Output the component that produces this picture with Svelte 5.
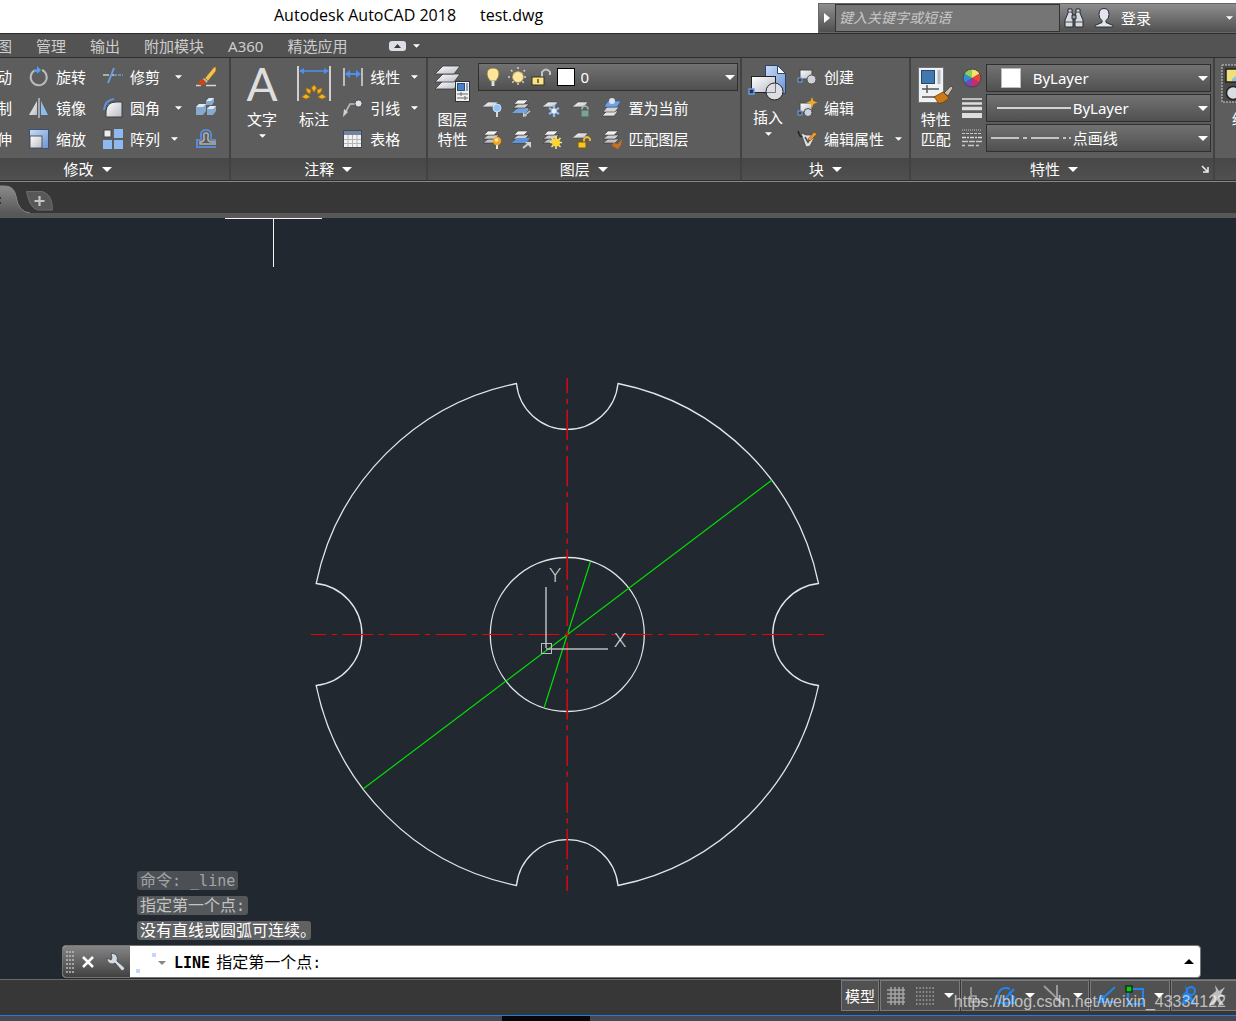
<script lang="ts">
    type Tool = { icon: string; label: string; menu?: boolean; wide?: boolean };

    const tabs = ["视图", "管理", "输出", "附加模块", "A360", "精选应用"];

    const modifyClipped = ["移动", "复制", "拉伸"];
    const modifyLeft: Tool[] = [
        { icon: "rotate", label: "旋转" },
        { icon: "mirror", label: "镜像" },
        { icon: "scale", label: "缩放" },
    ];
    const modifyRight: Tool[] = [
        { icon: "trim", label: "修剪", menu: true, wide: true },
        { icon: "fillet", label: "圆角", menu: true, wide: true },
        { icon: "array", label: "阵列", menu: true },
    ];
    const modifyIcons = ["erase", "explode", "offset"];

    const annotate: Tool[] = [
        { icon: "linear", label: "线性", menu: true },
        { icon: "leader", label: "引线", menu: true },
        { icon: "table", label: "表格" },
    ];

    const layerRows = [
        {
            icons: ["layoff", "layiso", "layfreeze", "laylock"],
            last: { icon: "laycurrent", label: "置为当前" },
        },
        {
            icons: ["layon", "layuniso", "laythaw", "layunlock"],
            last: { icon: "laymatch", label: "匹配图层" },
        },
    ];

    const block: Tool[] = [
        { icon: "blockcreate", label: "创建" },
        { icon: "blockedit", label: "编辑" },
        { icon: "attedit", label: "编辑属性", menu: true },
    ];

    const statusGroups = [
        ["grid", "snap", "menu"],
        ["ortho", "polar", "menu", "isodraft", "menu"],
        ["otrack", "osnap", "menu"],
        ["annovis", "annoauto"],
    ];

    let command = $state("");
    let search = $state("");
</script>

{#snippet arrow(small = false)}
    <svg class="arrow" class:small viewBox="0 0 10 5" aria-hidden="true">
        <path d="M0 0h10L5 5z" />
    </svg>
{/snippet}

{#snippet stack()}
    <path d="M6 10h11l-4 4H1z" fill="#c4c4c4" stroke="#333" stroke-width=".6" />
    <path d="M6 6h11l-4 4H1z" fill="#cfcfcf" stroke="#333" stroke-width=".6" />
    <path d="M6 2h10l-4 4H2z" fill="#f2f2f2" stroke="#444" stroke-width=".6" />
{/snippet}

{#snippet sheet()}
    <path d="M6 4h10l-4 5H0z" fill="url(#silver)" stroke="#444" stroke-width=".6" />
{/snippet}

{#snippet icon(name: string)}
    <svg class="icon" viewBox="0 0 20 20" aria-hidden="true">
        {#if name === "rotate"}
            <path d="M6 3.2A8 8 0 1 0 13 3" fill="none" stroke="#b9bcbc" stroke-width="2" />
            <path d="M5 4 11 3" stroke="#5b9bf0" stroke-width="2.4" />
            <path d="M8-1l4 4-4 4z" fill="#5b9bf0" />
        {:else if name === "mirror"}
            <path d="M8 3v14H0z" fill="url(#silver)" />
            <path d="M12 3v14h7z" fill="#8dbcf0" />
            <path d="M10 0v20" stroke="#c9c9c9" stroke-width="1.4" />
        {:else if name === "scale"}
            <rect x=".5" y=".5" width="19" height="19" fill="url(#blue)" stroke="#38507c" />
            <rect x="1" y="7" width="12" height="12" fill="url(#silver)" stroke="#555" />
        {:else if name === "trim"}
            <path d="M0 8h6M8 8h3" stroke="#c9c9c9" stroke-width="1.6" />
            <path d="M5 16 11 1" stroke="#6a9ee0" stroke-width="2" />
            <path d="M11 8h9" stroke="#6a9ee0" stroke-width="1.6" stroke-dasharray="3 1" />
        {:else if name === "fillet"}
            <path d="M3 19v-6q1-9 10-9h6v15z" fill="url(#silver)" stroke="#3f3f3f" />
            <path d="M1 12Q2 2 11 1" fill="none" stroke="#5d92dc" stroke-width="2" />
        {:else if name === "array"}
            <rect x="1" y="1" width="7" height="7" fill="#ededed" stroke="#444" />
            <rect x="11" y="0" width="9" height="9" fill="#8db8f2" />
            <rect x="0" y="11" width="9" height="9" fill="#8db8f2" />
            <rect x="11" y="11" width="9" height="9" fill="#8db8f2" />
        {:else if name === "erase"}
            <path d="M0 18.5h5M10 18.5h10" stroke="#d6d6d6" stroke-width="1.4" />
            <path d="M9 11 18 0h2v4l-8 10z" fill="#efc252" stroke="#8a5a10" stroke-width=".7" />
            <path d="M8 11l4 3-2 2-4-3z" fill="#b7bec8" />
            <path d="M3 18q-1-5 4-6l3 3q-2 4-7 3z" fill="#cf4510" />
        {:else if name === "explode"}
            <path d="M0 9l3-3h7v7l-3 4H0zM10 3l3-3h5v4l-2 3h-6zM11 10l3-2h6v5l-3 4h-6z" fill="#88a9cb" />
            <path d="M0 9l3-3h7L7 9zM10 3l3-3h5l-3 3zM11 11l3-3h6l-3 3z" fill="#dceafa" />
        {:else if name === "offset"}
            <path d="M20 11h-4q-2 0-1-3 1-7-5-7T5 8q1 3-1 3H1v7h19" fill="none" stroke="#5a8bd0" stroke-width="2" />
            <path d="M20 13h-5q-4-1-3-5 1-4-2-4T8 8q1 4-3 5H4v2h16" fill="none" stroke="#b0b0b0" stroke-width="1.6" />
        {:else if name === "linear"}
            <path d="M1 1v18M19 1v18" stroke="#d4d4d4" stroke-width="1.6" />
            <path d="M3 7h14" stroke="#4c91f0" stroke-width="2" />
            <path d="M2 7l5-4v8zM18 7l-5-4v8z" fill="#4c91f0" />
        {:else if name === "leader"}
            <path d="M2 15 7 6h7" fill="none" stroke="#bcbcbc" stroke-width="1.6" />
            <path d="M0 19l1-8 4 3z" fill="#d0d0d0" />
            <circle cx="15.5" cy="5.5" r="3.6" fill="#dfe2ea" stroke="#4b4b4b" />
        {:else if name === "table"}
            <rect x=".5" y="1.5" width="18" height="17" fill="#f2f2f2" stroke="#3f4a58" />
            <path d="M1 4h17" stroke="#74859b" stroke-width="4" />
            <path d="M1 10.5h17M1 14.5h17M5 6v12M9.5 6v12M14 6v12" stroke="#b3b3b3" />
        {:else if name === "layoff"}
            {@render sheet()}
            <path d="M15 13v6" stroke="#d5d5d5" stroke-width="2" />
            <circle cx="15" cy="10" r="4" fill="#8fc2f5" stroke="#d9ecff" stroke-width=".8" />
        {:else if name === "layiso"}
            {@render stack()}
            <path d="M5 11h12l-3 4H0z" fill="#6ea4e6" />
            <path d="M18 13l-5 4" stroke="#c6c6c6" stroke-width="1.6" />
            <path d="M11 19v-5l4 4z" fill="#c6c6c6" />
        {:else if name === "layfreeze"}
            {@render sheet()}
            <path d="M12 7v12M7 10l10 6M17 10 7 16" stroke="#93b8e8" stroke-width="2.4" />
            <circle cx="12" cy="13" r="2.5" fill="#e6f1ff" />
        {:else if name === "laylock"}
            {@render sheet()}
            <path d="M10 13v-3q3-4 6 0v3" fill="none" stroke="#9bb3ac" stroke-width="1.6" />
            <rect x="9" y="12" width="8" height="7" fill="#7fa095" stroke="#47655b" />
        {:else if name === "laycurrent"}
            <path d="M5 13h11l-4 5H0z" fill="#e4e4e4" stroke="#333" stroke-width=".6" />
            <path d="M5 9h12l-4 5H1z" fill="#d4d4d4" stroke="#333" stroke-width=".6" />
            <path d="M6 3h13l-4 6H2z" fill="#6ea4e6" stroke="#2f5282" stroke-width=".6" />
            <circle cx="10" cy="3" r="3" fill="#dce3ec" />
        {:else if name === "layon"}
            {@render stack()}
            <path d="M15 14v6" stroke="#ececec" stroke-width="2" />
            <circle cx="15" cy="12" r="4.2" fill="#f5a21c" />
            <circle cx="14.5" cy="11" r="2" fill="#ffe3a0" />
        {:else if name === "layuniso"}
            {@render stack()}
            <path d="M5 9h13l-4 5H0z" fill="#5f94dc" />
            <path d="M11 19l5-4" stroke="#d2d2d2" stroke-width="1.8" />
            <path d="M13 13h6v6z" fill="#d2d2d2" />
        {:else if name === "laythaw"}
            {@render stack()}
            <path d="M14 7v13M8 13.5h12M9.5 9l9 9M18.5 9l-9 9" stroke="#f8e58c" stroke-width="1.6" />
            <circle cx="14" cy="13.5" r="4" fill="#ffd52b" />
        {:else if name === "layunlock"}
            {@render sheet()}
            <path d="M12 13v-3q3-4 6 0v2" fill="none" stroke="#f0bf2c" stroke-width="1.8" />
            <rect x="6" y="13" width="8" height="6" fill="#f3c625" stroke="#7a5a05" />
        {:else if name === "laymatch"}
            {@render stack()}
            <path d="M20 10l-4 5-5-1-1 3 6 3 3-4z" fill="#c8701e" />
        {:else if name === "blockcreate"}
            <rect x="3" y="3" width="12" height="9" fill="url(#silver)" stroke="#4b4b4b" />
            <circle cx="14.5" cy="12.5" r="4.5" fill="#cfd2d8" stroke="#505050" />
            <rect x="1" y="11" width="4" height="4" fill="#444" stroke="#6ea4ee" />
        {:else if name === "blockedit"}
            <rect x="3" y="5" width="12" height="9" fill="url(#silver)" stroke="#4b4b4b" />
            <circle cx="11" cy="14.5" r="4" fill="#cfd2d8" stroke="#505050" />
            <rect x="1" y="13" width="4" height="4" fill="#444" stroke="#6ea4ee" />
            <path d="M15-1l1.5 4 4 1.5-4 1.5-1.5 4-1.5-4-4-1.5 4-1.5z" fill="#f5a823" />
        {:else if name === "attedit"}
            <path d="M1 2l2 5 3 1" fill="none" stroke="#222" stroke-width="1.5" />
            <path d="M4 4l5 2h6l2 3-4 8-4 1z" fill="#e1e1e1" stroke="#444" stroke-width=".7" />
            <path d="M8 8l3 5 2-3" fill="none" stroke="#555" stroke-width="1.8" />
            <path d="M11 10l6-7 3 2-7 7z" fill="#e99a2e" stroke="#7a4310" stroke-width=".6" />
        {:else if name === "lineweight"}
            <path d="M0 1h20" stroke="#dedede" stroke-width="1.5" />
            <path d="M0 5.5h20" stroke="#dedede" stroke-width="2.5" />
            <path d="M0 10.5h20" stroke="#dedede" stroke-width="3.5" />
            <path d="M0 17.5h20" stroke="#dedede" stroke-width="5" />
        {:else if name === "linetype"}
            <path d="M0 2h20" stroke="#c9c9c9" stroke-dasharray="1 1" />
            <path d="M0 5.5h20" stroke="#c9c9c9" stroke-dasharray="3 1" />
            <path d="M0 9.5h20" stroke="#d9d9d9" stroke-width="1.5" stroke-dasharray="4 1 2 1" />
            <path d="M0 13.5h20" stroke="#c9c9c9" stroke-width="1.5" stroke-dasharray="6 1" />
            <path d="M0 17.5h20" stroke="#c9c9c9" stroke-width="1.5" stroke-dasharray="3 3 6 2" />
        {:else if name === "color"}
            <path d="M10 10V1a9 9 0 0 1 7.8 4.5z" fill="#f6e26a" />
            <path d="M10 10 17.8 5.5a9 9 0 0 1 0 9z" fill="#e8453a" />
            <path d="M10 10l7.8 4.5A9 9 0 0 1 10 19z" fill="#c22d70" />
            <path d="M10 10v9a9 9 0 0 1-7.8-4.5z" fill="#7446b8" />
            <path d="M10 10 2.2 14.5a9 9 0 0 1 0-9z" fill="#2f8fd0" />
            <path d="M10 10 2.2 5.5A9 9 0 0 1 10 1z" fill="#8fce5a" />
            <circle cx="10" cy="10" r="9" fill="none" stroke="#444" />
        {:else if name === "grid"}
            <path d="M5 1v18M9 1v18M13 1v18M17 1v18M1 4h18M1 8h18M1 12h18M1 16h18" stroke="#a4a4a4" stroke-width="1.5" />
        {:else if name === "snap"}
            <path d="M1 2h18M1 6h18M1 10h18M1 14h18M1 18h18" stroke="#a3a3a3" stroke-width="1.5" stroke-dasharray="1.5 1.8" />
        {:else if name === "ortho"}
            <path d="M4 1v15h14M4 10h5v6" fill="none" stroke="#a0a0a0" stroke-width="1.6" />
        {:else if name === "polar"}
            <path d="M18 10a8 8 0 1 1-4-7M1 17h19M8 14 18 3M13 6q4 4 3 8" fill="none" stroke="#2384ea" stroke-width="2" />
        {:else if name === "isodraft"}
            <path d="M0 0l20 19M13-1v16" stroke="#a0a0a0" stroke-width="1.8" />
        {:else if name === "otrack"}
            <path d="M19 1 6 13M0 16h19" stroke="#2384ea" stroke-width="2" />
            <circle cx="6" cy="12" r="3" fill="#2384ea" />
        {:else if name === "osnap"}
            <path d="M4 3h14v15H3V4" fill="none" stroke="#2384ea" stroke-width="2" />
            <rect x="1" y="0" width="6" height="6" fill="#17c41b" stroke="#073b08" stroke-width="1.5" />
        {:else if name === "annovis"}
            <path d="M8-1 9 5 4 10l4-1-4 9h5l3-5 3 5h4l-5-8z" fill="#2384ea" />
            <circle cx="14" cy="5" r="4" fill="#4c5966" stroke="#2384ea" stroke-width="2" />
        {:else if name === "annoauto"}
            <path d="M9-1l1 6-6 5 4-1-5 10h5l3-5 3 5h4l-5-8 7-1-5-2 4-7-6 4z" fill="#bdbdbd" />
        {/if}
    </svg>
{/snippet}

{#snippet tool(t: Tool)}
    <button class="tool">
        {@render icon(t.icon)}
        <span>{t.label}</span>
        {#if t.menu}
            <span class="drop" class:wide={t.wide}>{@render arrow(true)}</span>
        {/if}
    </button>
{/snippet}

{#snippet footer(label: string)}
    <button class="panel-title">{label}{@render arrow()}</button>
{/snippet}

<svg class="defs" aria-hidden="true">
    <defs>
        <linearGradient id="silver" x1="0" y1="0" x2="1" y2="1">
            <stop offset="0" stop-color="#ffffff" />
            <stop offset="1" stop-color="#b9bcc6" />
        </linearGradient>
        <linearGradient id="blue" x1="0" y1="0" x2="1" y2="1">
            <stop offset="0" stop-color="#c9dcf6" />
            <stop offset="1" stop-color="#6c95d2" />
        </linearGradient>
        <linearGradient id="tab" x1="0" y1="0" x2="0" y2="1">
            <stop offset="0" stop-color="#8b8b8b" />
            <stop offset="1" stop-color="#595959" />
        </linearGradient>
    </defs>
</svg>

<div class="app">
    <header class="title-bar">
        <h1><span>Autodesk AutoCAD 2018</span><span>test.dwg</span></h1>
        <div class="info-bar">
            <button class="expand" aria-label="展开">
                <svg width="6" height="10" viewBox="0 0 6 10"><path d="M0 0v10l6-5z" fill="#fff" /></svg>
            </button>
            <input type="text" placeholder="键入关键字或短语" aria-label="搜索" bind:value={search} />
            <button class="find" aria-label="查找">
                <svg width="20" height="20" viewBox="0 0 20 20">
                    <path d="M4 1h4v4l1 2v12H1v-7L4 5zM12 1h4v4l3 7v7h-8V7l1-2z" fill="#d7dce2" stroke="#26292e" />
                    <path d="M8 7h4v4H8z" fill="#969ca5" stroke="#26292e" />
                    <path d="M1 14h8M11 14h8M4 4h4M12 4h4" stroke="#4a4f57" />
                </svg>
            </button>
            <button class="login">
                <svg width="20" height="20" viewBox="0 0 20 20">
                    <path d="M10 .5q5 0 5 6 0 4-3 6v2l7 3v1.5H1V17.5l7-3v-2q-3-2-3-6 0-6 5-6z" fill="#e2e6ec" stroke="#2b2e33" />
                </svg>
                <span>登录</span>
                {@render arrow(true)}
            </button>
        </div>
    </header>

    <nav class="tabs">
        {#each tabs as tab}
            <button>{tab}</button>
        {/each}
        <button class="collapse" aria-label="最小化功能区">
            <svg width="17" height="10" viewBox="0 0 17 10">
                <rect width="17" height="10" rx="3" fill="#dcdfe6" />
                <path d="M5 7l3.5-4L12 7z" fill="#3a3a3a" />
            </svg>
            {@render arrow(true)}
        </button>
    </nav>

    <div class="ribbon">
        <section class="panel modify">
            <div class="body">
                <div class="column clipped">
                    {#each modifyClipped as label}
                        <button class="tool"><span>{label}</span></button>
                    {/each}
                </div>
                <div class="column">
                    {#each modifyLeft as t}{@render tool(t)}{/each}
                </div>
                <div class="column">
                    {#each modifyRight as t}{@render tool(t)}{/each}
                </div>
                <div class="column">
                    {#each modifyIcons as name}
                        <button class="tool" aria-label={name}>{@render icon(name)}</button>
                    {/each}
                </div>
            </div>
            {@render footer("修改")}
        </section>

        <section class="panel annotate">
            <div class="body">
                <button class="big">
                    <svg width="34" height="40" viewBox="0 0 34 40">
                        <text x="17" y="37" text-anchor="middle" class="letter">A</text>
                    </svg>
                    <span>文字</span>
                    {@render arrow(true)}
                </button>
                <button class="big dimension">
                    <svg width="34" height="40" viewBox="0 0 34 40">
                        <path d="M1 2v35M33 2v35" stroke="#cfcfcf" stroke-width="2" />
                        <path d="M3 7h28" stroke="#4c91f0" stroke-width="1.5" />
                        <path d="M2 7l5-3v6zM32 7l-5-3v6z" fill="#4c91f0" />
                        <g fill="#f6b51c" stroke="#b4720c" stroke-width=".8">
                            <path d="M17 21l2.5 3-2.5 4-2.5-4z" />
                            <path d="M9 24l5 2-1 4-3-2z" />
                            <path d="M25 24l-5 2 1 4 3-2z" />
                            <path d="M5 33l4-3 4 3-4 2z" />
                            <path d="M29 33l-4-3-4 3 4 2z" />
                        </g>
                    </svg>
                    <span>标注</span>
                </button>
                <div class="column">
                    {#each annotate as t}{@render tool(t)}{/each}
                </div>
            </div>
            {@render footer("注释")}
        </section>

        <section class="panel layers">
            <div class="body">
                <button class="big">
                    <svg width="38" height="40" viewBox="0 0 38 40">
                        <g fill="url(#silver)" stroke="#3a3a3a" stroke-width=".8">
                            <path d="M9 17h17l-6 8H1z" />
                            <path d="M9 10h17l-6 8H1z" />
                            <path d="M9 2h17l-6 8H1z" />
                        </g>
                        <rect x="21.5" y="17.5" width="14" height="20" fill="#f1f1f1" stroke="#333" />
                        <rect x="23.5" y="19.5" width="7" height="7" fill="#4a80c4" stroke="#2b4e80" />
                        <path d="M33 19v8" stroke="#8a9fc0" stroke-width="2" />
                        <path d="M23 30h11M23 34h11M27 28v4M31 32v4" stroke="#666" />
                    </svg>
                    <span>图层<br />特性</span>
                </button>
                <div class="layer-tools">
                    <div class="combo">
                        <svg width="68" height="22" viewBox="0 0 68 22" aria-hidden="true">
                            <path d="M8 2q6 0 6 6 0 3-3 7H5Q2 11 2 8q0-6 6-6z" fill="#fbe69b" stroke="#8a7332" stroke-width=".8" />
                            <path d="M8 15v5" stroke="#d9e0e7" stroke-width="3" />
                            <path d="M33 1v20M23 11h20M26 4l14 14M40 4 26 18" stroke="#d8d4bd" stroke-width="1.5" stroke-dasharray="2 2" />
                            <circle cx="33" cy="11" r="5.5" fill="#fce79f" stroke="#a58e54" stroke-width=".7" />
                            <path d="M57 11V6q4-5 8 0v3" fill="none" stroke="#bfc5cc" stroke-width="2" />
                            <rect x="47" y="11" width="12" height="8" fill="#f8e48e" stroke="#3c3310" />
                            <path d="M53 13v4" stroke="#55481a" stroke-width="1.5" />
                        </svg>
                        <i class="swatch dark"></i>
                        <select aria-label="图层"><option>0</option></select>
                        {@render arrow()}
                    </div>
                    {#each layerRows as row}
                        <div class="row">
                            {#each row.icons as name}
                                <button class="tool" aria-label={name}>{@render icon(name)}</button>
                            {/each}
                            {@render tool(row.last)}
                        </div>
                    {/each}
                </div>
            </div>
            {@render footer("图层")}
        </section>

        <section class="panel block">
            <div class="body">
                <button class="big">
                    <svg width="40" height="38" viewBox="0 0 40 38">
                        <path d="M17.5 1.5h12l8 8v20h-20z" fill="url(#blue)" stroke="#2d4266" />
                        <path d="M29.5 1.5v8h8z" fill="#fff" stroke="#2d4266" />
                        <rect x="3.5" y="12.5" width="24" height="16" fill="url(#silver)" stroke="#222" />
                        <circle cx="26.5" cy="27.5" r="8.5" fill="#dcdee3" stroke="#222" />
                        <path d="M19 28.5h8.5V20" fill="none" stroke="#777" />
                        <rect x="1" y="25" width="5" height="5" fill="#333" stroke="#5d9cf2" stroke-width="1.5" />
                    </svg>
                    <span>插入</span>
                    {@render arrow(true)}
                </button>
                <div class="column">
                    {#each block as t}{@render tool(t)}{/each}
                </div>
            </div>
            {@render footer("块")}
        </section>

        <section class="panel properties">
            <div class="body">
                <button class="big">
                    <svg width="36" height="40" viewBox="0 0 36 40">
                        <rect x=".5" y="3.5" width="25" height="35" fill="#f0f1f3" stroke="#70757c" />
                        <rect x="3.5" y="6.5" width="13" height="13" fill="#4178ae" stroke="#24486e" />
                        <path d="M21 6v14" stroke="#b4bac2" stroke-width="3" />
                        <path d="M4 25h17M4 33h17M9 21v8" stroke="#555" stroke-width="1.5" />
                        <path d="M26 29l7-7 2 2-5 8z" fill="#c5beb2" stroke="#4c3b28" stroke-width=".8" />
                        <path d="M16 33l9-5 6 6q-6 6-11 5-1-3-4-6z" fill="#cb7a1a" stroke="#6e3c06" stroke-width=".8" />
                    </svg>
                    <span>特性<br />匹配</span>
                </button>
                <div class="combos">
                    <div class="combo-row">
                        {@render icon("color")}
                        <div class="combo">
                            <i class="swatch"></i>
                            <select class="spaced" aria-label="颜色"><option>ByLayer</option></select>
                            {@render arrow()}
                        </div>
                    </div>
                    <div class="combo-row">
                        {@render icon("lineweight")}
                        <div class="combo">
                            <svg width="82" height="4" viewBox="0 0 82 4"><path d="M6 2h74" stroke="#d4d4d4" stroke-width="2" /></svg>
                            <select aria-label="线宽"><option>ByLayer</option></select>
                            {@render arrow()}
                        </div>
                    </div>
                    <div class="combo-row">
                        {@render icon("linetype")}
                        <div class="combo">
                            <svg width="82" height="4" viewBox="0 0 82 4">
                                <path d="M0 2h80" stroke="#e4e4e4" stroke-width="1.5" stroke-dasharray="28 4 4 4 28 4 3 3 2 2" />
                            </svg>
                            <select aria-label="线型"><option>点画线</option></select>
                            {@render arrow()}
                        </div>
                    </div>
                </div>
            </div>
            <div class="footer-row">
                {@render footer("特性")}
                <button class="launcher" aria-label="特性选项板">
                    <svg width="8" height="8" viewBox="0 0 8 8">
                        <path d="M1 1l5 5M7 2v5H2" fill="none" stroke="#eee" stroke-width="1.5" />
                    </svg>
                </button>
            </div>
        </section>

        <section class="panel groups">
            <div class="body">
                <button class="big">
                    <svg width="36" height="40" viewBox="0 0 36 40">
                        <rect x="1" y="1" width="34" height="37" fill="#4a4a4a" stroke="#d0d0d0" stroke-dasharray="2 1" />
                        <rect x="5" y="5" width="20" height="13" fill="#efe07a" stroke="#222" stroke-width="1.5" />
                        <path d="M11 15l8-6h6v8H11z" fill="#8fc0e4" />
                        <circle cx="12" cy="29" r="6.5" fill="#d8dfe4" stroke="#222" stroke-width="1.5" />
                    </svg>
                    <span>组</span>
                </button>
            </div>
            <div class="panel-title"></div>
        </section>
    </div>

    <div class="file-tabs">
        <svg width="60" height="31" viewBox="0 0 60 31" aria-hidden="true">
            <path d="M0 4h5q9 0 11 10 2 16 14 17H0z" fill="url(#tab)" />
            <path d="M0 4h5q9 0 11 10 2 16 14 17" fill="none" stroke="#888" />
            <path d="M0 15v2M0 20v2" stroke="#333" stroke-width="2" />
            <path d="M26.5 9.5h16q10 3 10 18.5h-15q-8-2-11-18.5z" fill="#585858" stroke="#6c6c6c" />
            <path d="M39.5 14v10M34.5 19h10" stroke="#c4c4c4" stroke-width="2.2" />
        </svg>
    </div>

    <main class="canvas">
        <svg class="drawing" viewBox="0 218 1236 761" preserveAspectRatio="xMinYMin meet">
            <g fill="none" stroke="#e3e5e6" stroke-width="1.3">
                <path
                    d="M618 383.5A256.5 256.5 0 0 1 818.5 583.5A51.3 51.3 0 0 0 818.5 685.5A256.5 256.5 0 0 1 618 885.5A51 51 0 0 0 516.500 885.5A256.5 256.5 0 0 1 316.2 685.5A51.3 51.3 0 0 0 316.2 583.5A256.5 256.5 0 0 1 516.5 383.5A51 51 0 0 0 618 383.5z"
                />
                <circle cx="567.3" cy="634.5" r="77" />
            </g>
            <g stroke="#00df00" stroke-width="1.2">
                <path d="M363 789 772 480M544 708l46.5-146.5" />
            </g>
            <g stroke-dasharray="30.5 5.5 5.1 5.5" stroke-dashoffset="15.2">
                <path d="M311 634.5h513" stroke="#f00000" stroke-width="1.2" />
                <path d="M567.2 378v513" stroke="#cc0a10" stroke-width="1.6" />
            </g>
            <g fill="none" stroke="#b9bcc0">
                <path d="M546 587v61" stroke-width="1.5" />
                <path d="M546 649h62" stroke-width="1.5" />
                <rect x="541.5" y="643.5" width="10" height="10" />
            </g>
            <text x="555" y="582" text-anchor="middle" class="axis">Y</text>
            <text x="620" y="647" text-anchor="middle" class="axis">X</text>
            <path d="M225 218.5h97M273.5 218v49" fill="none" stroke="#f4f4f4" />
        </svg>

        <div class="console">
            <p class="old">命令<span class="mono">: _line</span></p>
            <p class="mid">指定第一个点<span class="mono">:</span></p>
            <p class="new">没有直线或圆弧可连续。</p>
            <div class="command">
                <div class="handle">
                    <svg width="8" height="22" viewBox="0 0 8 22" aria-hidden="true">
                        <path d="M1 0v22M4 0v22M7 0v22" stroke="#bdbdbd" stroke-width="1.5" stroke-dasharray="2 2" />
                    </svg>
                    <button aria-label="关闭">
                        <svg width="12" height="12" viewBox="0 0 12 12"><path d="M1 1l10 10M11 1 1 11" stroke="#fff" stroke-width="2.5" /></svg>
                    </button>
                    <button aria-label="自定义">
                        <svg width="20" height="20" viewBox="0 0 20 20">
                            <path d="M5 1l1 5-1 2-4-2q0 6 6 6l2-1 7 8 3-2-1-2-7-6q2-7-6-8z" fill="#d5dbe3" stroke="#3e444b" stroke-width=".8" />
                        </svg>
                    </button>
                </div>
                <svg class="recent" width="32" height="22" viewBox="0 0 32 22" aria-hidden="true">
                    <path d="M0 18h4v4H0zM16 2h4v4h-4z" fill="#c5d7fb" />
                    <path d="M22 10h8l-4 4z" fill="#858585" />
                </svg>
                <label for="command"><b class="mono">LINE</b>指定第一个点<span class="mono">:</span></label>
                <input id="command" type="text" bind:value={command} />
                <button class="history" aria-label="命令历史">
                    <svg width="10" height="5" viewBox="0 0 10 5"><path d="M0 5h10L5 0z" /></svg>
                </button>
            </div>
        </div>
    </main>

    <footer class="status-bar">
        <button class="model">模型</button>
        {#each statusGroups as group}
            <div class="group">
                {#each group as name}
                    <button aria-label={name}>
                        {#if name === "menu"}{@render arrow()}{:else}{@render icon(name)}{/if}
                    </button>
                {/each}
            </div>
        {/each}
        <span class="watermark">https://blog.csdn.net/weixin_43334122</span>
    </footer>
    <div class="desktop"><i></i></div>
</div>

<style>
    :global(body) {
        margin: 0;
    }

    .app {
        display: flex;
        flex-direction: column;
        height: 100vh;
        overflow: hidden;
        background: #373737;
        color: #fff;
        font: 15px/20px "Noto Sans", "Noto Sans CJK SC", sans-serif;
    }

    .defs {
        position: absolute;
        width: 0;
        height: 0;
    }

    button,
    input,
    select {
        margin: 0;
        padding: 0;
        border: 0;
        background: none;
        color: inherit;
        font: inherit;
    }

    svg {
        display: block;
        flex: none;
        overflow: visible;
    }

    .icon {
        width: 20px;
        height: 20px;
    }

    .arrow {
        width: 10px;
        height: 5px;
        fill: #fff;
    }

    .arrow.small {
        width: 7px;
        height: 4px;
    }

    /* title bar */
    .title-bar {
        display: flex;
        justify-content: space-between;
        align-items: flex-end;
        height: 33px;
        border-bottom: 1px solid #2c2c2c;
        background: #fff;
    }

    h1 {
        display: flex;
        gap: 24px;
        margin: 0;
        padding: 0 0 8px 274px;
        color: #000;
        font: 16px/20px "Open Sans", sans-serif;
    }

    .info-bar {
        display: flex;
        align-items: center;
        box-sizing: border-box;
        width: 418px;
        height: 30px;
        border: 1px solid #666;
        border-right: 0;
        background: linear-gradient(#8e8e8e, #505050);
    }

    .expand {
        display: flex;
        justify-content: center;
        width: 16px;
    }

    .info-bar input {
        box-sizing: border-box;
        width: 225px;
        height: 28px;
        padding: 0 3px 2px;
        border: 1px solid #333;
        background: #757575;
        font-size: 14px;
        font-style: italic;
    }

    .info-bar input::placeholder {
        color: #c6c6c6;
        opacity: 1;
    }

    .find {
        padding: 0 5px 0 4px;
    }

    .login {
        display: flex;
        flex: 1;
        align-items: center;
        gap: 7px;
        padding: 0 3px 0 5px;
    }

    .login .arrow {
        margin-left: auto;
    }

    /* ribbon tabs */
    .tabs {
        display: flex;
        align-items: center;
        gap: 24px;
        height: 23px;
        border-bottom: 1px solid #2e2e2e;
        background: #535353;
        color: #cdcdcd;
    }

    .tabs button {
        white-space: nowrap;
    }

    .tabs button:first-child {
        display: flex;
        justify-content: flex-end;
        width: 12px;
    }

    .tabs .collapse {
        display: flex;
        align-items: center;
        gap: 7px;
        margin-left: 18px;
    }

    /* ribbon */
    .ribbon {
        display: flex;
        border-bottom: 1px solid #868686;
        background: #5d5d5d;
    }

    .panel {
        display: flex;
        flex-direction: column;
        box-sizing: border-box;
        min-width: 0;
        overflow: hidden;
        border-right: 2px solid #424242;
        border-bottom: 1px solid #2f2f2f;
    }

    .modify {
        flex: 231 1 0;
    }

    .annotate {
        flex: 196 1 0;
    }

    .layers {
        flex: 315 1 0;
    }

    .block {
        flex: 168 1 0;
    }

    .properties {
        flex: 305 1 0;
    }

    .groups {
        flex: 21 1 0;
        border-right: 0;
    }

    .body {
        display: flex;
        height: 97px;
        padding-top: 3px;
    }

    .panel-title {
        display: flex;
        flex: 1;
        justify-content: center;
        align-items: center;
        gap: 8px;
        height: 22px;
        min-height: 22px;
        background: linear-gradient(#474747, #505050);
    }

    /* the panel runs on past the left edge, so its title is off centre */
    .modify .panel-title {
        padding-right: 54px;
    }

    .footer-row {
        display: flex;
        background: linear-gradient(#474747, #505050);
    }

    .footer-row .panel-title {
        background: none;
    }

    .launcher {
        padding: 0 4px;
    }

    .column {
        display: flex;
        flex: none;
        flex-direction: column;
    }

    .tool {
        display: flex;
        align-items: center;
        gap: 7px;
        height: 31px;
        white-space: nowrap;
    }

    .drop {
        padding-left: 4px;
    }

    .drop.wide {
        padding-left: 8px;
    }

    .modify .column {
        margin-right: 17px;
    }

    .modify .column:nth-child(3) {
        margin-right: 14px;
    }

    .modify .clipped {
        align-items: flex-end;
        width: 12px;
    }

    .big {
        display: flex;
        flex: none;
        flex-direction: column;
        align-items: center;
        height: 94px;
        padding-top: 3px;
    }

    .big span {
        margin-top: 5px;
    }

    .big .arrow {
        margin-top: 5px;
    }

    .annotate .body {
        padding-left: 14px;
    }

    .annotate .big {
        width: 34px;
    }

    .annotate .dimension {
        margin: 0 12px 0 18px;
    }

    .letter {
        fill: #dedede;
        font: 46px/46px Lato, sans-serif;
    }

    .layers .body {
        gap: 6px;
        padding-right: 2px;
        padding-left: 6px;
    }

    .layers .big {
        width: 38px;
    }

    .layer-tools {
        flex: 1;
        min-width: 0;
    }

    .row {
        display: flex;
        gap: 10px;
        padding-left: 4px;
    }

    .combo {
        display: flex;
        flex: 1;
        align-items: center;
        box-sizing: border-box;
        min-width: 0;
        height: 28px;
        padding: 0 2px 0 4px;
        border: 1px solid #2f2f2f;
        background: linear-gradient(#727272, #505050);
    }

    .layer-tools .combo {
        margin: 2px 0 1px;
        padding-left: 6px;
    }

    .combo select {
        flex: 1;
        min-width: 0;
        appearance: none;
    }

    .combo select.spaced {
        padding-left: 12px;
    }

    .swatch {
        width: 18px;
        height: 18px;
        margin-left: 10px;
        border: 1px solid #bbb;
        background: #fff;
    }

    .swatch.dark {
        width: 16px;
        height: 16px;
        margin: 0 6px 0 4px;
        border-color: #000;
    }

    .block .body {
        gap: 9px;
        padding-left: 6px;
    }

    .properties .body {
        gap: 8px;
        padding-right: 2px;
        padding-left: 7px;
    }

    .combos {
        display: flex;
        flex: 1;
        flex-direction: column;
        gap: 2px;
        min-width: 0;
        padding-top: 3px;
    }

    .combo-row {
        display: flex;
        align-items: center;
        gap: 4px;
    }

    .groups .body {
        padding-left: 6px;
    }

    /* file tabs */
    .file-tabs {
        height: 31px;
        border-bottom: 5px solid #585858;
        background: #373737;
    }

    /* drawing area */
    .canvas {
        position: relative;
        flex: 1;
        min-height: 0;
        background: #212830;
    }

    .drawing {
        width: 100%;
        height: 100%;
    }

    .axis {
        fill: #e6e6e6;
        font: 200 20px "DejaVu Sans", sans-serif;
    }

    .console {
        position: absolute;
        right: 35px;
        bottom: 1px;
        left: 62px;
        font-size: 16px;
    }

    .console p {
        width: fit-content;
        height: 19px;
        margin: 0 0 6px 75px;
        padding: 0 3px;
        border-radius: 3px;
        font-feature-settings: "halt";
        line-height: 19px;
    }

    .console .new {
        margin-bottom: 5px;
        background: #5f6163;
    }

    .console .mid {
        background: #55585a;
        color: #c3c4c5;
    }

    .console .old {
        background: #4c5054;
        color: #a3a5a7;
    }

    .mono {
        font-family: "DejaVu Sans Mono", monospace;
        font-size: 15px;
        line-height: 16px;
    }

    .command {
        display: flex;
        align-items: center;
        box-sizing: border-box;
        height: 33px;
        border: 1px solid #767676;
        border-radius: 4px;
        overflow: hidden;
        background: #fff;
        color: #000;
    }

    .command b {
        margin-right: 6px;
    }

    .handle {
        display: flex;
        align-items: center;
        gap: 8px;
        align-self: stretch;
        width: 64px;
        padding-left: 3px;
        background: linear-gradient(#858585, #414141);
    }

    .recent {
        margin: 0 6px;
    }

    .handle button:last-child {
        margin-left: 4px;
    }

    .command input {
        flex: 1;
        min-width: 0;
        outline: 0;
    }

    .history {
        padding: 0 6px;
    }

    /* status bar */
    .status-bar {
        display: flex;
        position: relative;
        justify-content: flex-end;
        gap: 1px;
        height: 31px;
        padding-bottom: 4px;
        border-top: 1px solid #6a6a6a;
        border-bottom: 1px solid #1c7fd8;
    }

    .group,
    .model {
        display: flex;
        align-items: center;
        gap: 9px;
        box-sizing: border-box;
        padding: 0 5px;
        border: 1px solid #7a7a7a;
        background: #515151;
    }

    .model {
        width: 38px;
        padding: 0 3px;
    }

    .group:nth-of-type(4) {
        width: 65px;
        border-right: 0;
    }

    .watermark {
        position: absolute;
        right: 10px;
        bottom: 3px;
        color: rgba(255, 255, 255, 0.65);
        font: 16px/20px "Liberation Sans", sans-serif;
    }

    .desktop {
        display: flex;
        justify-content: center;
        height: 5px;
        background: #464858;
    }

    .desktop i {
        width: 88px;
        margin-right: 144px;
        background: #08080c;
    }
</style>
